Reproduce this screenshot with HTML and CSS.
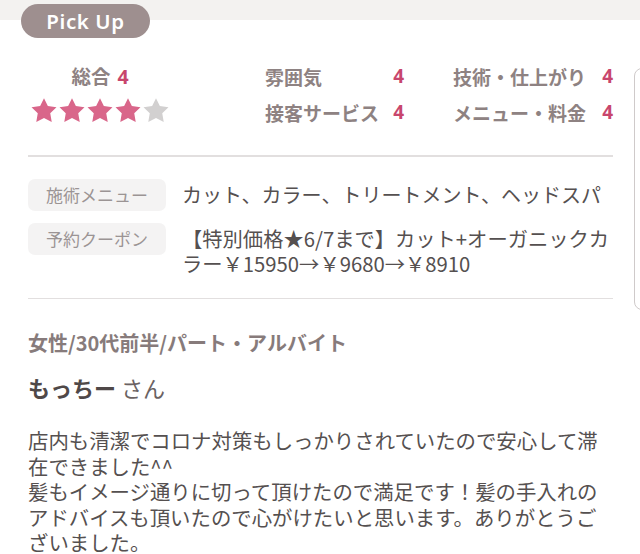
FILE: index.html
```html
<!DOCTYPE html>
<html lang="ja">
<head>
<meta charset="utf-8">
<link rel="stylesheet" href="styles.css">
</head>
<body>
<div class="page">
  <div class="band">
    <span class="pill">Pick Up</span>
  </div>
  <div class="layout">
    <div class="main">
      <section class="ratings">
        <div class="overall">
          <div class="overall-label">総合<span class="val">4</span></div>
          <div class="stars">
            <svg class="star on" viewBox="0 0 24 24"><path d="M12 1l3.3 6.7 7.4 1.1-5.35 5.2 1.27 7.35L12 17.9l-6.62 3.45 1.27-7.35L1.3 8.8l7.4-1.1z"/></svg>
            <svg class="star on" viewBox="0 0 24 24"><path d="M12 1l3.3 6.7 7.4 1.1-5.35 5.2 1.27 7.35L12 17.9l-6.62 3.45 1.27-7.35L1.3 8.8l7.4-1.1z"/></svg>
            <svg class="star on" viewBox="0 0 24 24"><path d="M12 1l3.3 6.7 7.4 1.1-5.35 5.2 1.27 7.35L12 17.9l-6.62 3.45 1.27-7.35L1.3 8.8l7.4-1.1z"/></svg>
            <svg class="star on" viewBox="0 0 24 24"><path d="M12 1l3.3 6.7 7.4 1.1-5.35 5.2 1.27 7.35L12 17.9l-6.62 3.45 1.27-7.35L1.3 8.8l7.4-1.1z"/></svg>
            <svg class="star off" viewBox="0 0 24 24"><path d="M12 1l3.3 6.7 7.4 1.1-5.35 5.2 1.27 7.35L12 17.9l-6.62 3.45 1.27-7.35L1.3 8.8l7.4-1.1z"/></svg>
          </div>
        </div>
        <div class="grid">
          <div class="cell"><span>雰囲気</span><span class="val">4</span></div>
          <div class="cell"><span>技術・仕上がり</span><span class="val">4</span></div>
          <div class="cell"><span>接客サービス</span><span class="val">4</span></div>
          <div class="cell"><span>メニュー・料金</span><span class="val">4</span></div>
        </div>
      </section>
      <hr class="rule rule-1">
      <section class="details">
        <div class="row">
          <span class="tag">施術メニュー</span>
          <span class="value">カット、カラー、トリートメント、ヘッドスパ</span>
        </div>
        <div class="row">
          <span class="tag">予約クーポン</span>
          <span class="value coupon">【特別価格★6/7まで】カット+オーガニックカ<br>ラー￥15950→￥9680→￥8910</span>
        </div>
      </section>
      <hr class="rule rule-2">
      <section class="review">
        <div class="profile">女性/30代前半/パート・アルバイト</div>
        <div class="name"><strong>もっちー</strong> さん</div>
        <p class="body">店内も清潔でコロナ対策もしっかりされていたので安心して滞在できました^^<br>髪もイメージ通りに切って頂けたので満足です！髪の手入れのアドバイスも頂いたので心がけたいと思います。ありがとうございました。</p>
      </section>
    </div>
    <div class="next-card"></div>
  </div>
</div>
</body>
</html>
```

FILE: styles.css
```css
html, body {
  margin: 0;
  padding: 0;
  background: #ffffff;
  overflow: hidden;
}

body {
  width: 640px;
  height: 554px;
  font-family: "Noto Sans CJK JP", "Noto Sans", sans-serif;
  color: #555050;
}

.page {
  background: linear-gradient(#f3f2f0 0, #f3f2f0 20px, #ffffff 20px);
}

.band {
  padding: 4px 0 0 21px;
  height: 34px;
}

.pill {
  display: inline-block;
  width: 129px;
  height: 34px;
  line-height: 34px;
  border-radius: 17px;
  background: #9e8f8f;
  color: #ffffff;
  text-align: center;
  font-family: "Noto Sans", "Open Sans", sans-serif;
  font-weight: 600;
  font-size: 20.5px;
  letter-spacing: 0.6px;
}

.layout {
  display: flex;
  align-items: flex-start;
  padding-top: 20px;
}

.main {
  width: 585px;
  margin-left: 28px;
  flex-shrink: 0;
}

.next-card {
  flex-shrink: 0;
  width: 40px;
  height: 240px;
  margin-left: 21px;
  margin-top: 10px;
  border: 1.5px solid #cfcaca;
  border-radius: 8px;
}

/* ratings */
.ratings {
  display: flex;
  justify-content: space-between;
  height: 72px;
}

.overall {
  width: 144px;
  text-align: center;
}

.overall-label {
  height: 36px;
  line-height: 36px;
  font-size: 19.5px;
  font-weight: 700;
  color: #8e8282;
}

.overall-label .val {
  margin-left: 7px;
}

.stars {
  display: flex;
  justify-content: center;
  margin-top: 3px;
}

.star {
  width: 28px;
  height: 28px;
}

.star.on {
  fill: #d9668a;
}

.star.off {
  fill: #d2d0d0;
}

.grid {
  display: grid;
  grid-template-columns: 139px 160px;
  grid-auto-rows: 36px;
  column-gap: 49px;
}

.cell {
  display: flex;
  justify-content: space-between;
  align-items: center;
  font-size: 19px;
  font-weight: 700;
  color: #8e8282;
}

.val {
  color: #c8466d;
  font-family: "Noto Sans", sans-serif;
  font-weight: 700;
}

.rule {
  border: 0;
  height: 1.5px;
  background: #e2dfdf;
  margin: 0;
}

.rule-1 {
  margin-top: 25px;
}

/* details */
.details {
  padding-top: 22px;
  padding-bottom: 22px;
  display: flex;
  flex-direction: column;
  gap: 12px;
}

.row {
  display: flex;
  align-items: flex-start;
}

.tag {
  flex-shrink: 0;
  width: 138px;
  height: 32px;
  line-height: 32px;
  border-radius: 7px;
  background: #f4f3f3;
  color: #9b9494;
  font-size: 17px;
  text-align: center;
}

.value {
  margin-left: 16px;
  padding-top: 3px;
  font-size: 20px;
  line-height: 25px;
  color: #555050;
}

.coupon {
  font-size: 20.3px;
}

/* review */
.review {
  padding-top: 30px;
}

.profile {
  font-size: 20px;
  font-weight: 700;
  line-height: 28px;
  color: #877b7b;
}

.name {
  margin-top: 15px;
  font-size: 22px;
  line-height: 30px;
  color: #6a6262;
}

.name strong {
  font-size: 22px;
  color: #4f4848;
}

.body {
  margin: 26px 0 0;
  font-size: 20.4px;
  line-height: 25.6px;
  color: #555050;
}
```
